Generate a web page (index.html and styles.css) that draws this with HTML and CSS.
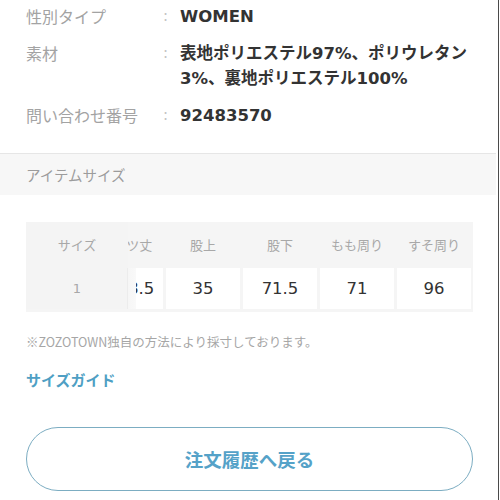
FILE: index.html
```html
<!DOCTYPE html>
<html lang="ja">
<head>
<meta charset="utf-8">
<link rel="stylesheet" href="styles.css">
</head>
<body>
<div class="frame">
  <div class="page">
    <dl class="spec">
      <dt class="label">性別タイプ</dt><dd class="colon">:</dd><dd class="value">WOMEN</dd>
      <dt class="label">素材</dt><dd class="colon">:</dd><dd class="value">表地ポリエステル97%、ポリウレタン3%、裏地ポリエステル100%</dd>
      <dt class="label">問い合わせ番号</dt><dd class="colon">:</dd><dd class="value">92483570</dd>
    </dl>

    <div class="section-title">アイテムサイズ</div>

    <div class="size-table">
      <div class="sticky-col">
        <div class="head-cell">サイズ</div>
        <div class="size-cell">1</div>
      </div>
      <div class="scroll-area">
        <div class="scroll-inner">
          <div class="head-cell">パンツ丈</div>
          <div class="head-cell">股上</div>
          <div class="head-cell">股下</div>
          <div class="head-cell">もも周り</div>
          <div class="head-cell">すそ周り</div>
          <div class="data-cell data-cell-wide">98.5</div>
          <div class="data-cell">35</div>
          <div class="data-cell">71.5</div>
          <div class="data-cell">71</div>
          <div class="data-cell">96</div>
        </div>
      </div>
    </div>

    <p class="note">※ZOZOTOWN独自の方法により採寸しております。</p>
    <a class="guide" href="#">サイズガイド</a>

    <div class="btn-wrap">
      <a class="back-btn" href="#">注文履歴へ戻る</a>
    </div>
  </div>
  <div class="edge"></div>
</div>
</body>
</html>
```

FILE: styles.css
```css
html, body {
  margin: 0;
  padding: 0;
  background: #fff;
}

body {
  font-family: "DejaVu Sans", "Noto Sans CJK JP", sans-serif;
  color: #333;
}

.frame {
  display: flex;
  width: 500px;
  height: 500px;
  overflow: hidden;
}

.page {
  width: 496px;
  flex: none;
}

.edge {
  width: 1px;
  margin-left: 2px;
  background: #4a4a4a;
  flex: none;
}

.spec {
  margin: 0;
  padding: 4px 27px 0 26px;
  display: grid;
  grid-template-columns: 137px 17px 1fr;
  row-gap: 12px;
  line-height: 25px;
}

.spec dt, .spec dd {
  margin: 0;
}

.label {
  font-family: "Noto Sans CJK JP", sans-serif;
  font-size: 16px;
  color: #a3a3a3;
}

.colon {
  font-size: 15px;
  color: #c4c4c4;
}

.value {
  font-size: 16.5px;
  font-weight: 700;
  color: #333;
}

.section-title {
  margin-top: 25px;
  border-top: 1px solid #e6e6e6;
  background: #f7f7f7;
  height: 41px;
  line-height: 41px;
  padding-left: 26px;
  font-family: "Noto Sans CJK JP", sans-serif;
  font-size: 14.5px;
  color: #9c9c9c;
}

.size-table {
  margin: 27px 0 0 26px;
  width: 447px;
  background: #f5f5f5;
  display: flex;
  padding-bottom: 3px;
}

.sticky-col {
  width: 102px;
  flex: none;
  display: flex;
  flex-direction: column;
  row-gap: 1px;
  background: #f4f4f4;
  position: relative;
  z-index: 1;
}

.scroll-area {
  flex: 1;
  overflow: hidden;
  padding-right: 2px;
}

.scroll-inner {
  margin-left: -39px;
  display: grid;
  grid-template-columns: repeat(5, 74px);
  grid-template-rows: 45px 41px;
  column-gap: 3px;
  row-gap: 1px;
}

.head-cell {
  height: 45px;
  display: flex;
  align-items: center;
  justify-content: center;
  font-family: "Noto Sans CJK JP", sans-serif;
  font-size: 13px;
  color: #a8a8a8;
}

.size-cell {
  width: 110px;
  box-sizing: border-box;
  padding-right: 8px;
  height: 41px;
  display: flex;
  align-items: center;
  justify-content: center;
  font-size: 13px;
  color: #a8a8a8;
  background: linear-gradient(to right, #f4f4f4 0, #f4f4f4 101px, #ececec 101px, #ececec 102px, #f6f6f6 102px, #f9f9f9 110px);
}

.data-cell {
  background: #fff;
  display: flex;
  align-items: center;
  justify-content: center;
  font-size: 16.5px;
  color: #333;
}

.data-cell-wide {
  padding-left: 20px;
}

.note {
  margin: 21px 0 0 26px;
  font-family: "Noto Sans CJK JP", sans-serif;
  font-size: 12.5px;
  line-height: 18px;
  color: #a6a6a6;
}

.guide {
  display: block;
  margin: 18px 0 0 26px;
  font-family: "Noto Sans CJK JP", sans-serif;
  font-size: 15px;
  font-weight: 700;
  line-height: 22px;
  color: #4f9fc4;
  text-decoration: none;
}

.btn-wrap {
  padding: 36px 23px 0 26px;
}

.back-btn {
  display: flex;
  align-items: center;
  justify-content: center;
  height: 62px;
  border: 1.5px solid #7cadc2;
  border-radius: 33px;
  font-family: "Noto Sans CJK JP", sans-serif;
  font-size: 18.5px;
  font-weight: 700;
  color: #55a2c8;
  text-decoration: none;
}
```
